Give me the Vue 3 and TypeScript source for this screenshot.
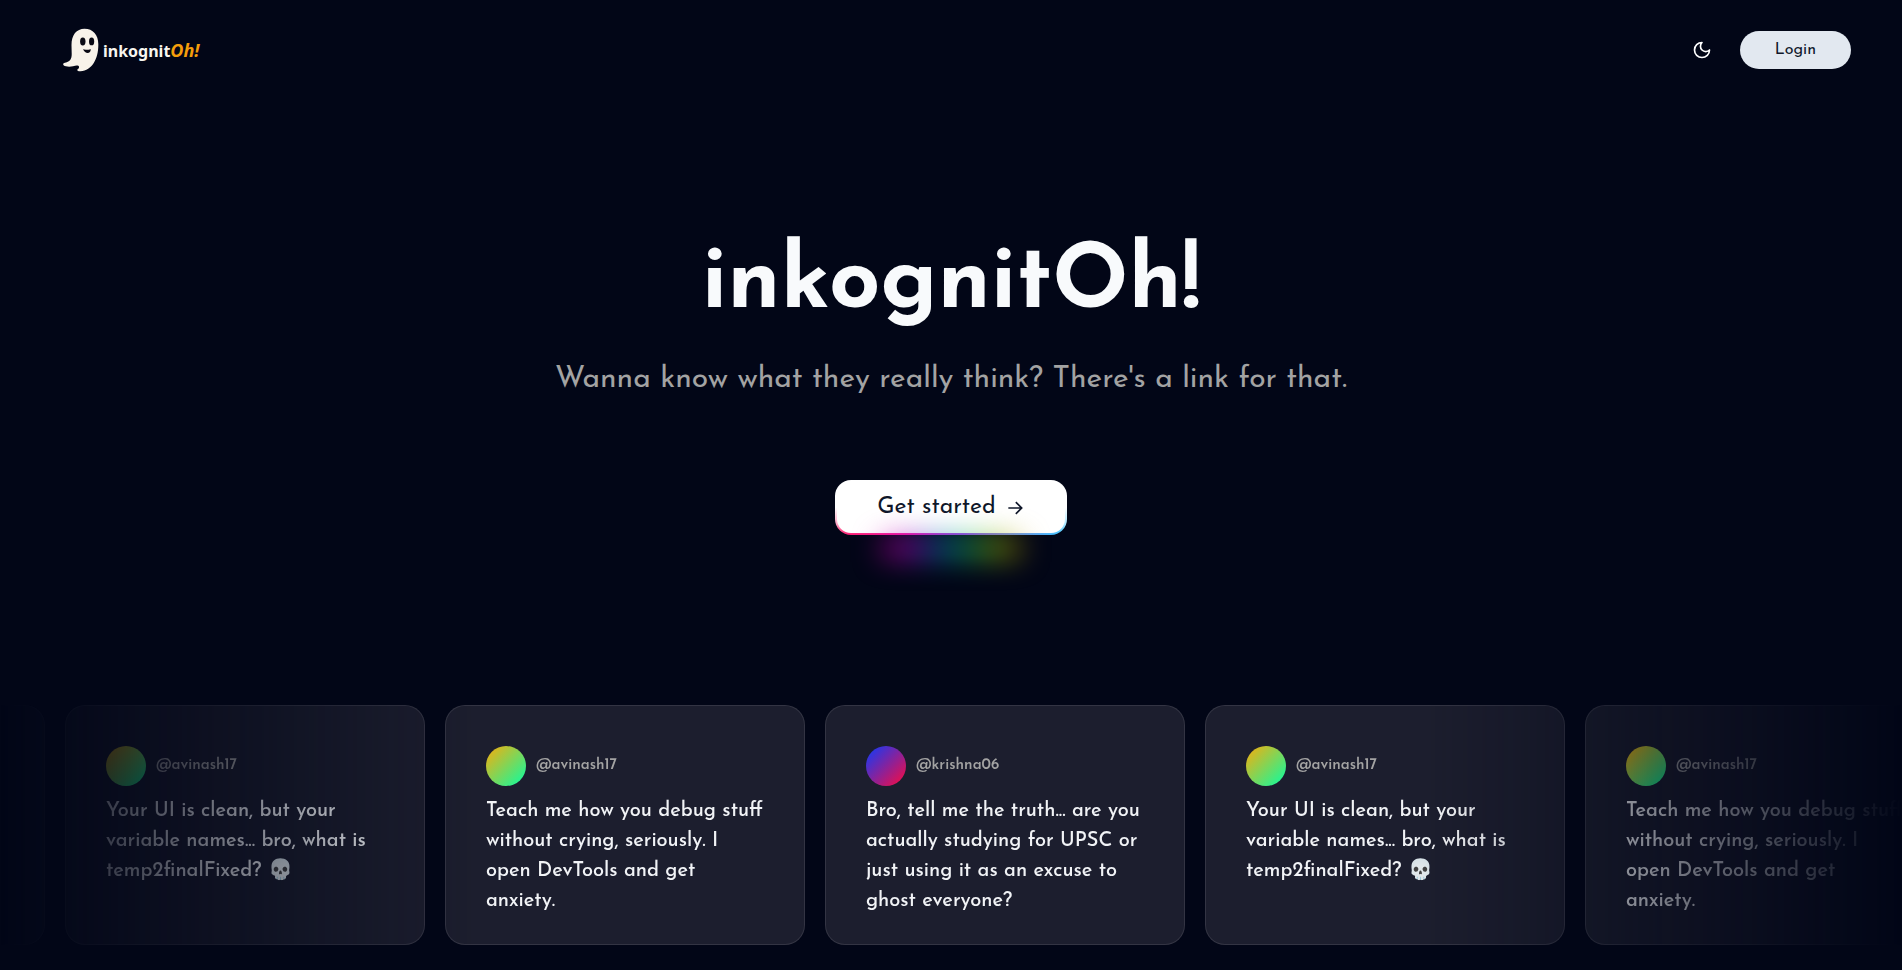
<script setup lang="ts">
interface Message {
  handle: string
  text: string
  tone: 'sunny' | 'violet'
}

const teach: Message = {
  handle: '@avinash17',
  text: 'Teach me how you debug stuff without crying, seriously. I open DevTools and get anxiety.',
  tone: 'sunny',
}
const truth: Message = {
  handle: '@krishna06',
  text: 'Bro, tell me the truth... are you actually studying for UPSC or just using it as an excuse to ghost everyone?',
  tone: 'violet',
}
const clean: Message = {
  handle: '@avinash17',
  text: 'Your UI is clean, but your variable names... bro, what is temp2finalFixed? 💀',
  tone: 'sunny',
}

const messages: Message[] = [truth, clean, teach, truth, clean, teach]
</script>

<template>
  <div class="page">
    <header class="topbar">
      <a class="logo" href="#" aria-label="inkognitOh! home">
        <svg class="ghost" viewBox="0 0 36 44" aria-hidden="true">
          <path
            d="M8.500 17C8.500 7 13.500 .8 21.500 .8C30 .8 35.300 7 35.300 16C35.600 30 29.500 42.500 17.500 43.300C15.500 43.400 14 42.700 14.300 41.800C14.600 40.900 16.400 40.500 16 38.700C15.500 37.100 13 37.400 10 38.200C6.500 39 2.500 38.700 .6 37.200C-.3 36.100 .3 35.200 2 34.800C7.500 33.500 8.800 30.500 8.700 25.500Z"
            fill="#f8f3ea"
          />
          <ellipse cx="19.800" cy="13.600" rx="2.700" ry="4" fill="#0a0a14" />
          <ellipse cx="28.600" cy="13.400" rx="2.600" ry="3.900" fill="#0a0a14" />
          <path d="M20 21.300C21.500 22 25.500 21.900 27.700 20.900C28.200 26 22.200 26.500 20 21.300Z" fill="#0a0a14" />
        </svg>
        <span class="wordmark">inkognit<span class="accent">Oh!</span></span>
      </a>
      <nav class="actions">
        <button class="theme" type="button" aria-label="Toggle theme">
          <svg viewBox="0 0 24 24" aria-hidden="true">
            <path d="M12 3a6 6 0 0 0 9 9 9 9 0 1 1-9-9Z" />
          </svg>
        </button>
        <button class="login" type="button">Login</button>
      </nav>
    </header>

    <main>
      <section class="hero">
        <h1>inkognitOh!</h1>
        <p>Wanna know what they really think? There's a link for that.</p>
        <button class="start" type="button">
          <span>Get started</span>
          <svg viewBox="0 0 24 24" aria-hidden="true">
            <path d="M4 12h16M13 5l7 7-7 7" />
          </svg>
        </button>
      </section>

      <section class="marquee" aria-label="Messages">
        <div class="track">
          <article v-for="(message, index) in messages" :key="index" class="card">
            <div class="author">
              <span class="avatar" :class="message.tone"></span>
              <span class="handle">{{ message.handle }}</span>
            </div>
            <p>{{ message.text }}</p>
          </article>
        </div>
      </section>
    </main>
  </div>
</template>

<style>
body {
  background: #020617;
}
</style>

<style scoped>
.page {
  min-height: 100vh;
  box-sizing: border-box;
  overflow: hidden;
  background: #020617;
  color: #f8fafc;
  font-family: 'Josefin Sans', Lato, 'Noto Sans', sans-serif;
}

button {
  font-family: inherit;
  border: 0;
  cursor: pointer;
}

.topbar {
  display: flex;
  align-items: center;
  justify-content: space-between;
  height: 100px;
  padding: 0 51px 0 63px;
}

.logo {
  display: flex;
  align-items: center;
  gap: 4px;
  color: #f8f6f0;
  text-decoration: none;
}

.ghost {
  width: 36px;
  height: 44px;
}

.wordmark {
  font: 700 16px/24px 'Noto Sans', sans-serif;
}

.accent {
  color: #f59e0b;
  font-family: 'Open Sans', sans-serif;
  font-size: 18px;
  font-style: italic;
  font-weight: 700;
}

.actions {
  display: flex;
  align-items: center;
  gap: 20px;
}

.theme {
  display: grid;
  place-items: center;
  width: 36px;
  height: 36px;
  padding: 0;
  background: none;
  color: #fff;
}

.theme svg {
  width: 20px;
  height: 20px;
  fill: none;
  stroke: currentColor;
  stroke-width: 2;
  stroke-linejoin: round;
  stroke-linecap: round;
}

.login {
  height: 38px;
  padding: 0 35px;
  border-radius: 19px;
  background: #e2e8f0;
  color: #0f172a;
  font-size: 16px;
  font-weight: 400;
}

.hero {
  display: flex;
  flex-direction: column;
  align-items: center;
  padding: 129px 24px 170px;
}

h1 {
  margin: 0;
  font-size: 90px;
  line-height: 112px;
  font-weight: 700;
}

.hero p {
  margin: 17px 0 78px;
  color: #a3a3a3;
  font-size: 30px;
  line-height: 44px;
}

.start {
  position: relative;
  display: flex;
  align-items: center;
  gap: 9px;
  height: 55px;
  padding: 0 40px;
  border: 2px solid transparent;
  border-radius: 16px;
  background:
    linear-gradient(#fff, #fff) padding-box,
    linear-gradient(#fff 50%, rgba(255, 255, 255, 0.6) 80%, transparent) border-box,
    linear-gradient(90deg, #ff1a66, #f0149b 30%, #a52ef0 55%, #6f86e8 75%, #2fc4ff) border-box;
  color: #0f172a;
  font-size: 23px;
}

.start::before {
  content: '';
  position: absolute;
  left: 20%;
  bottom: -22px;
  width: 60%;
  height: 14px;
  background: linear-gradient(90deg, #d400a0, #b000c8 20%, #1466c8 38%, #00b880 58%, #7cc000 80%, #d09000);
  filter: blur(15px);
}

.start svg {
  width: 20px;
  height: 20px;
  fill: none;
  stroke: currentColor;
  stroke-width: 2;
}

.marquee {
  overflow: hidden;
  padding-bottom: 24px;
  mask-image: linear-gradient(to right, transparent, #000 25%, #000 75%, transparent);
}

.track {
  display: flex;
  gap: 20px;
  width: max-content;
  margin-left: -315px;
}

.card {
  box-sizing: border-box;
  width: 360px;
  min-height: 240px;
  padding: 40px 40px 28px;
  border: 1px solid rgba(255, 255, 255, 0.1);
  border-radius: 20px;
  background: #1c1e2e;
}

.author {
  display: flex;
  align-items: center;
  gap: 10px;
}

.avatar {
  width: 40px;
  height: 40px;
  border-radius: 50%;
}

.sunny {
  background: linear-gradient(135deg, #fbab09, #06ffa5);
}

.violet {
  background: linear-gradient(135deg, #0a3cff, #ff0a3c);
}

.handle {
  color: #a3a3a3;
  font-size: 15px;
  line-height: 20px;
  font-weight: 600;
}

.card p {
  margin: 10px 0 0;
  color: #f1f3f6;
  font-size: 20px;
  line-height: 30px;
  font-weight: 500;
}
</style>
